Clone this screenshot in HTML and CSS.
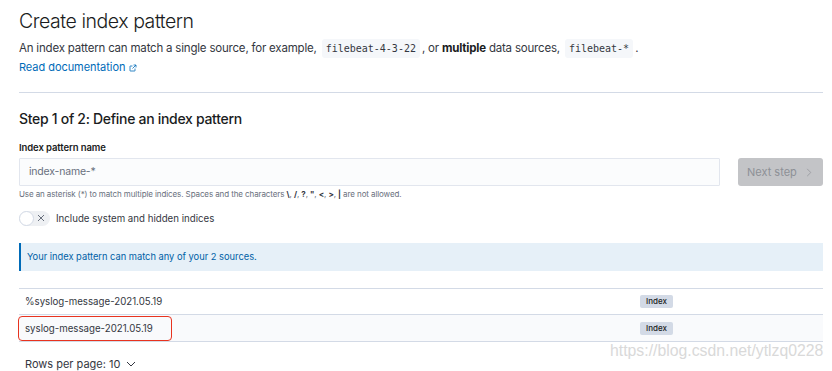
FILE: index.html
```html
<!DOCTYPE html>
<html>
<head>
<meta charset="utf-8">
<link rel="stylesheet" href="styles.css">
</head>
<body>
<div class="page">
  <h1 class="title">Create index pattern</h1>
  <p class="desc">An index pattern can match a single source, for example, <code class="chip">filebeat-4-3-22</code>, or <strong>multiple</strong> data sources, <code class="chip">filebeat-*</code>.</p>
  <a class="doclink" href="#">Read documentation <svg class="ext" width="8" height="8" viewBox="0 0 16 16"><path d="M9 2h5v5M14 2L7 9M12 9v4.5a.5.5 0 0 1-.5.5h-9a.5.5 0 0 1-.5-.5v-9a.5.5 0 0 1 .5-.5H7" fill="none" stroke="#006bb8" stroke-width="1.6"/></svg></a>
  <hr class="rule">
  <h2 class="step">Step 1 of 2: Define an index pattern</h2>
  <div class="label">Index pattern name</div>
  <div class="inputrow">
    <div class="input">index-name-*</div>
    <button class="next">Next step <svg width="8" height="9" viewBox="0 0 8 10"><path d="M2 1l4 4-4 4" fill="none" stroke="#9a9ca1" stroke-width="1"/></svg></button>
  </div>
  <div class="help">Use an asterisk (*) to match multiple indices. Spaces and the characters <b>\</b>, <b>/</b>, <b>?</b>, <b>"</b>, <b>&lt;</b>, <b>&gt;</b>, <b>|</b> are not allowed.</div>
  <div class="togglerow">
    <span class="switch"><span class="knob"></span><svg class="x" width="8" height="8" viewBox="0 0 8 8"><path d="M1 1l6 6M7 1L1 7" stroke="#69707d" stroke-width="1"/></svg></span>
    <span class="tlabel">Include system and hidden indices</span>
  </div>
  <div class="callout">Your index pattern can match any of your 2 sources.</div>
  <div class="table">
    <div class="row"><span class="name">%syslog-message-2021.05.19</span><span class="badge">Index</span></div>
    <div class="row alt"><span class="name">syslog-message-2021.05.19</span><span class="badge">Index</span><span class="mark"></span></div>
  </div>
  <div class="pager">Rows per page: 10 <svg width="10" height="6" viewBox="0 0 10 6"><path d="M1 1l4 4 4-4" fill="none" stroke="#343741" stroke-width="1"/></svg></div>
  <div class="watermark">https://blog.csdn.net/ytlzq0228</div>
</div>
</body>
</html>
```
FILE: styles.css
```css
* { box-sizing: border-box; }
html, body { margin: 0; padding: 0; background: #fff; }
body { font-family: Inter, "Noto Sans", sans-serif; color: #343741; width: 832px; height: 371px; overflow: hidden; }
.page { position: relative; padding: 6px 9px 0 19px; display: flex; flex-direction: column; height: 371px; }
.title { margin: 0; font-size: 19.5px; font-weight: 300; line-height: 30px; color: #1a1c21; letter-spacing: -0.45px; }
.desc { margin: 3px 0 0; font-size: 11.5px; line-height: 18px; color: #343741; letter-spacing: -0.2px; }
.desc strong { font-weight: 700; color: #1a1c21; }
.chip { font-family: "DejaVu Sans Mono", monospace; font-size: 10px; letter-spacing: 0; background: #f5f7fa; padding: 4px 4px; border-radius: 3px; color: #343741; margin: 0 2px; }
.doclink { font-size: 11px; line-height: 18px; color: #006bb8; text-decoration: none; align-self: flex-start; letter-spacing: -0.05px; }
.ext { vertical-align: -1px; margin-left: 1px; }
.rule { margin: 16px 0 0; border: 0; border-top: 1px solid #d3dae6; width: 804px; }
.step { margin: 16px 0 0; font-size: 14px; font-weight: 500; line-height: 20px; color: #1a1c21; letter-spacing: -0.3px; }
.label { margin-top: 12px; font-size: 9.5px; font-weight: 600; line-height: 14px; color: #1a1c21; letter-spacing: -0.1px; }
.inputrow { display: flex; gap: 18px; margin-top: 3px; width: 804px; }
.input { width: 701px; height: 28px; background: #fbfcfd; border: 1px solid #e2e6ee; border-radius: 1px; font-size: 10.5px; line-height: 26px; padding-left: 9px; color: #69707d; letter-spacing: -0.2px; }
.next { width: 85px; height: 28px; background: #c3c4c7; border: 0; border-radius: 3px; font-family: Inter, sans-serif; font-size: 11px; color: #8d9096; padding: 0 0 0 9px; text-align: left; display: flex; align-items: center; gap: 8px; }
.help { margin-top: 2px; font-size: 8px; line-height: 12px; color: #69707d; letter-spacing: -0.1px; }
.help b { font-weight: 700; color: #343741; }
.togglerow { display: flex; align-items: center; margin-top: 10px; height: 16px; }
.switch { position: relative; width: 31px; height: 15px; border-radius: 8px; background: #eef0f3; display: inline-block; }
.knob { position: absolute; left: 0; top: 0; width: 15px; height: 15px; border-radius: 50%; background: #fff; border: 1px solid #d3dae6; }
.x { position: absolute; left: 18px; top: 3.5px; }
.tlabel { margin-left: 6px; font-size: 9.7px; color: #343741; }
.callout { margin-top: 17px; width: 804px; height: 28px; flex: none; background: #e6f0f8; border-left: 2px solid #006bb8; font-size: 9.3px; line-height: 28px; color: #0061a6; padding-left: 6px; }
.table { margin-top: 17px; width: 804px; border-top: 1px solid #d3dae6; flex: none; }
.row { position: relative; display: flex; align-items: center; height: 26px; border-bottom: 1px solid #d3dae6; font-size: 9.7px; color: #343741; }
.row.alt { height: 27px; background: #f9fafc; }
.name { width: 621px; padding-left: 6px; }
.badge { background: #d3dae6; font-size: 8px; font-weight: 500; line-height: 13px; padding: 0 6px; border-radius: 2px; color: #1a1c21; }
.mark { position: absolute; left: -1px; top: 1px; width: 154px; height: 25px; border: 1.5px solid #e8331f; border-radius: 4px; }
.pager { margin-top: 15px; padding-left: 6px; font-size: 11px; line-height: 14px; color: #343741; display: flex; align-items: center; gap: 6px; }
.watermark { position: absolute; left: 610px; top: 342px; font-family: "Liberation Sans", Arial, sans-serif; font-size: 15.8px; color: #d9d9d9; }
```
